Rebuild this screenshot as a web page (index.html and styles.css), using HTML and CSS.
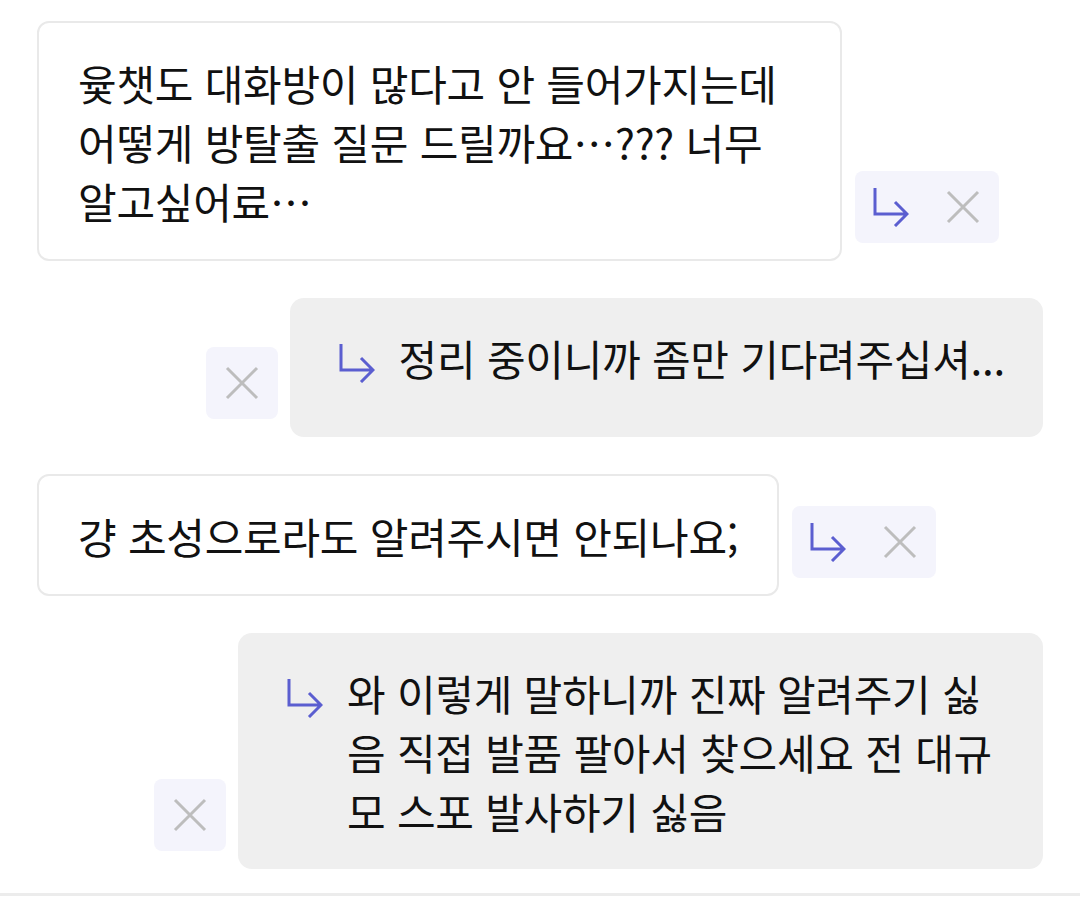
FILE: index.html
```html
<!DOCTYPE html>
<html lang="ko">
<head>
    <meta charset="UTF-8">
    <meta name="viewport" content="width=device-width, initial-scale=1.0">
    <title>답장</title>
    <link rel="stylesheet" href="styles.css">
</head>
<body>
    <div class="chat">
        <div class="row">
            <div class="bubble question">윷챗도 대화방이 많다고 안 들어가지는데 어떻게 방탈출 질문 드릴까요…??? 너무 알고싶어료…</div>
            <div class="actions">
                <button class="act reply" title="답장">
                    <svg width="36" height="40" viewBox="0 0 36 40"><path d="M2 1V27H33M22 15L34 27L22 39"/></svg>
                </button>
                <button class="act close" title="삭제">
                    <svg width="34" height="34" viewBox="0 0 34 34"><path d="M2 2L32 32M32 2L2 32"/></svg>
                </button>
            </div>
        </div>

        <div class="row mine">
            <div class="actions">
                <button class="act close" title="삭제">
                    <svg width="34" height="34" viewBox="0 0 34 34"><path d="M2 2L32 32M32 2L2 32"/></svg>
                </button>
            </div>
            <div class="bubble answer">
                <svg class="mark" width="36" height="40" viewBox="0 0 36 40"><path d="M2 1V27H33M22 15L34 27L22 39"/></svg>
                <p>정리 중이니까 좀만 기다려주십셔...</p>
            </div>
        </div>

        <div class="row">
            <div class="bubble question">걍 초성으로라도 알려주시면 안되나요;</div>
            <div class="actions">
                <button class="act reply" title="답장">
                    <svg width="36" height="40" viewBox="0 0 36 40"><path d="M2 1V27H33M22 15L34 27L22 39"/></svg>
                </button>
                <button class="act close" title="삭제">
                    <svg width="34" height="34" viewBox="0 0 34 34"><path d="M2 2L32 32M32 2L2 32"/></svg>
                </button>
            </div>
        </div>

        <div class="row mine">
            <div class="actions">
                <button class="act close" title="삭제">
                    <svg width="34" height="34" viewBox="0 0 34 34"><path d="M2 2L32 32M32 2L2 32"/></svg>
                </button>
            </div>
            <div class="bubble answer">
                <svg class="mark" width="36" height="40" viewBox="0 0 36 40"><path d="M2 1V27H33M22 15L34 27L22 39"/></svg>
                <p>와 이렇게 말하니까 진짜 알려주기 싫음 직접 발품 팔아서 찾으세요 전 대규모 스포 발사하기 싫음</p>
            </div>
        </div>
    </div>
    <div class="divider"></div>
</body>
</html>
```

FILE: styles.css
```css
body {
    margin: 0;
    background-color: #ffffff;
    color: #111111;
    font-family: "Noto Sans CJK KR", "Noto Sans", sans-serif;
}
.chat {
    display: flex;
    flex-direction: column;
    gap: 37px;
    padding: 21px 37px 0 37px;
}
.row {
    display: flex;
    align-items: flex-end;
    gap: 13px;
}
.row.mine {
    justify-content: flex-end;
    gap: 12px;
}
.bubble {
    max-width: 805px;
    box-sizing: border-box;
    font-size: 42px;
    line-height: 59px;
    letter-spacing: -0.25px;
}
.question {
    border: 2px solid #e9e9e9;
    border-radius: 12px;
    padding: 30px 39px 29px;
}
.answer {
    display: flex;
    align-items: flex-start;
    gap: 24px;
    min-height: 139px;
    background-color: #efefef;
    border-radius: 14px;
    padding: 30px 38px 29px 49px;
}
.answer p {
    margin: 0;
}
.mark {
    flex: none;
    margin-top: 15px;
}
.actions {
    display: flex;
    flex: none;
    margin-bottom: 18px;
    background-color: #f4f4fc;
    border-radius: 8px;
}
.act {
    width: 72px;
    height: 72px;
    padding: 0;
    border: none;
    background: none;
    display: flex;
    align-items: center;
    justify-content: center;
}
.act svg {
    fill: none;
    stroke-width: 3;
}
.reply svg,
.mark {
    fill: none;
    stroke: #5b5ed0;
    stroke-width: 3;
}
.close svg {
    stroke: #bdbdbd;
}
.divider {
    height: 3px;
    margin-top: 24px;
    background-color: #ececec;
}
```
